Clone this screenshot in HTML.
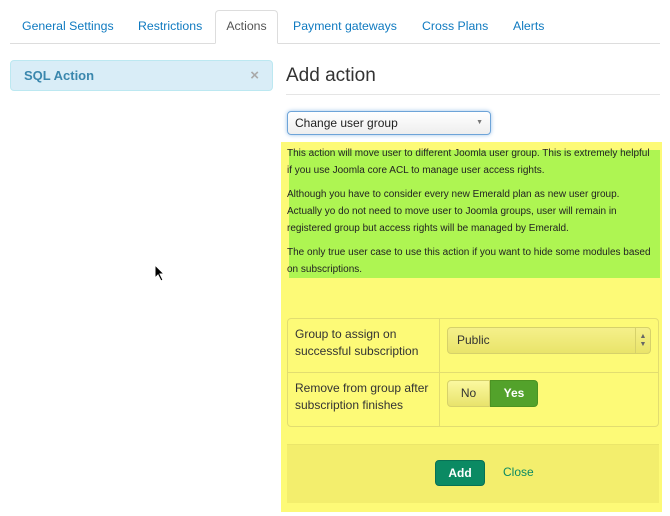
<!DOCTYPE html>
<html><head><style>
*{box-sizing:border-box}
body{margin:0;width:670px;height:516px;background:#fff;font-family:"Liberation Sans",sans-serif;position:relative;overflow:hidden;color:#333}
.a{position:absolute}
.tab{position:absolute;top:10px;height:34px;line-height:32px;font-size:12.3px;color:#0f7ac0}
</style></head><body>
<div class="a" style="left:10px;top:43px;width:650px;height:1px;background:#ddd"></div>
<div class="tab" style="left:22px">General Settings</div>
<div class="tab" style="left:138px">Restrictions</div>
<div class="a" style="left:215px;top:10px;width:63px;height:34px;border:1px solid #ddd;border-bottom:1px solid #fff;border-radius:4px 4px 0 0;background:#fff;font-size:12.3px;line-height:31px;text-align:center;color:#555">Actions</div>
<div class="tab" style="left:293px">Payment gateways</div>
<div class="tab" style="left:422px">Cross Plans</div>
<div class="tab" style="left:513px">Alerts</div>

<div class="a" style="left:10px;top:60px;width:263px;height:31px;background:#d9edf7;border:1px solid #bce8f1;border-radius:4px;font-size:13px;font-weight:bold;color:#3a87ad;line-height:29px;padding-left:13px">SQL Action<span style="position:absolute;right:13px;color:#aaa;font-size:15px;font-weight:bold">×</span></div>

<div class="a" style="left:286px;top:65px;font-size:19px;color:#333">Add action</div>
<div class="a" style="left:286px;top:94px;width:374px;height:1px;background:#e5e5e5"></div>
<div class="a" style="left:287px;top:111px;width:204px;height:24px;border:1px solid #6ea4d8;border-radius:4px;box-shadow:0 0 4px #9cc3ea;background:linear-gradient(#fff,#eee);font-size:12px;line-height:22px;padding-left:7px;color:#222">Change user group<span style="position:absolute;right:7px;top:0;font-size:7px;color:#777">▼</span></div>

<div class="a" style="left:281px;top:142px;width:381px;height:370px;background:#fdfa77"></div>
<div class="a" style="left:289px;top:150px;width:371px;height:128px;background:#aef552"></div>
<div class="a" style="left:287px;top:145px;width:380px;font-size:10px;line-height:17px;color:#222;white-space:nowrap">
<div>This action will move user to different Joomla user group. This is extremely helpful<br>if you use Joomla core ACL to manage user access rights.</div>
<div style="margin-top:7px">Although you have to consider every new Emerald plan as new user group.<br>Actually yo do not need to move user to Joomla groups, user will remain in<br>registered group but access rights will be managed by Emerald.</div>
<div style="margin-top:7px">The only true user case to use this action if you want to hide some modules based<br>on subscriptions.</div>
</div>

<div class="a" style="left:287px;top:318px;width:372px;height:109px;border:1px solid #e2dd70;border-radius:4px"></div>
<div class="a" style="left:288px;top:372px;width:370px;height:1px;background:#e2dd70"></div>
<div class="a" style="left:439px;top:319px;width:1px;height:107px;background:#e2dd70"></div>
<div class="a" style="left:295px;top:326px;font-size:12px;line-height:17px;color:#333">Group to assign on<br>successful subscription</div>
<div class="a" style="left:295px;top:380px;font-size:12px;line-height:17px;color:#333">Remove from group after<br>subscription finishes</div>
<div class="a" style="left:447px;top:327px;width:204px;height:27px;border:1px solid #d6d16a;border-radius:4px;background:linear-gradient(#f5f08a,#e9e46a);font-size:12px;line-height:25px;padding-left:9px;color:#333">Public<span style="position:absolute;right:0;top:0;width:15px;height:25px;border-left:1px solid #d6d16a;font-size:7px;line-height:8px;text-align:center;padding-top:5px;color:#666">▲<br>▼</span></div>
<div class="a" style="left:447px;top:380px;width:43px;height:27px;border:1px solid #d6d16a;border-radius:4px 0 0 4px;background:linear-gradient(#fbf8a0,#e8e36c);font-size:12px;line-height:25px;text-align:center;color:#333">No</div>
<div class="a" style="left:490px;top:380px;width:48px;height:27px;border:1px solid #4c9322;border-radius:0 4px 4px 0;background:#53a22b;font-size:12px;font-weight:bold;line-height:25px;text-align:center;color:#fff">Yes</div>

<div class="a" style="left:287px;top:444px;width:372px;height:59px;background:#f3ee6d;border-top:1px solid #ebe66a"></div>
<div class="a" style="left:435px;top:460px;width:50px;height:26px;border-radius:4px;background:#0b8a63;border:1px solid #087055;color:#fff;font-size:12px;font-weight:bold;text-align:center;line-height:24px">Add</div>
<div class="a" style="left:503px;top:465px;font-size:12px;color:#0b8a63">Close</div>

<svg class="a" style="left:154px;top:264px" width="12" height="18" viewBox="0 0 12 18"><path d="M1 1 L1 14 L4 11 L7 17 L9 16 L6 10 L10 10 Z" fill="#000" stroke="#fff" stroke-width="1"/></svg>
</body></html>
